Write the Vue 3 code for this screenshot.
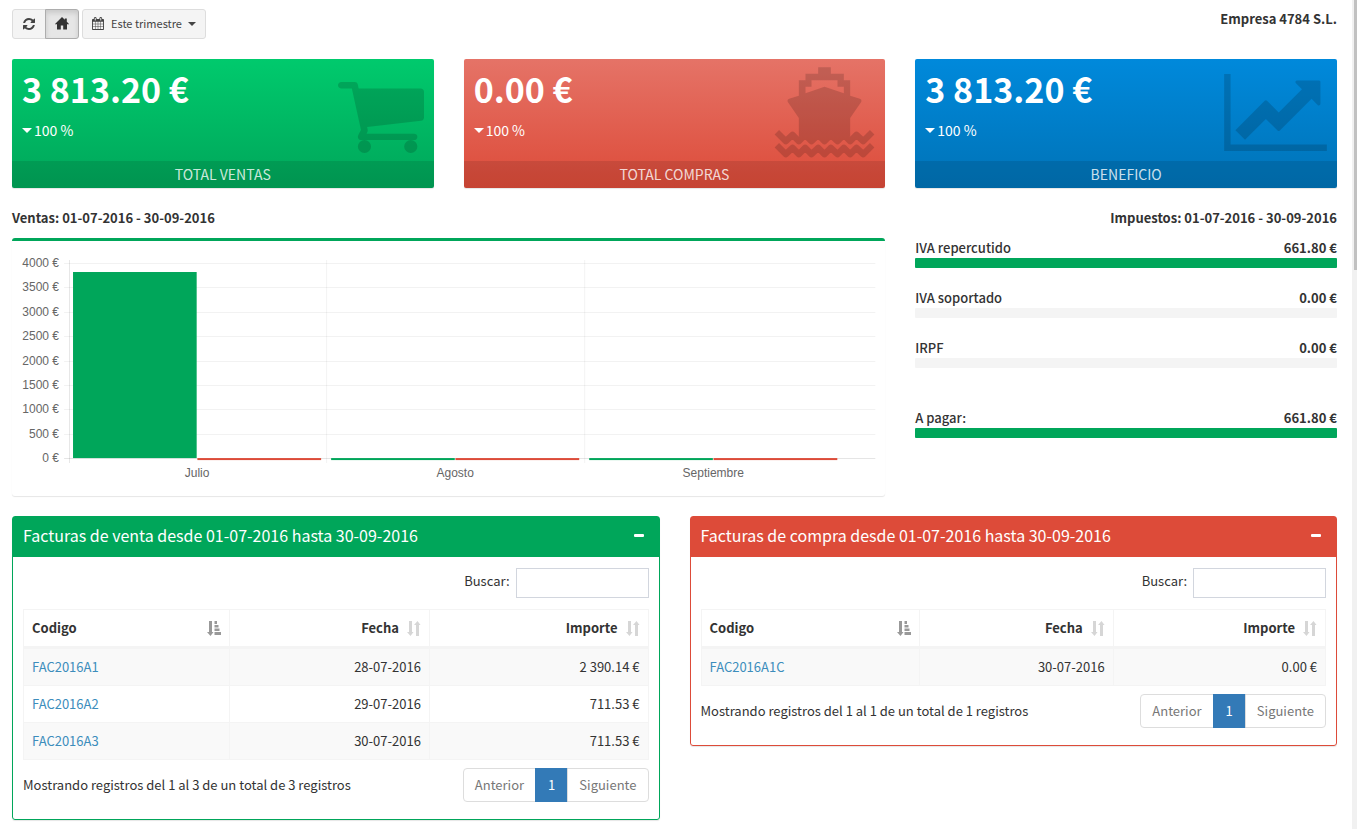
<script setup>
const cards = [
  { tone: 'green', icon: 'cart', value: '3 813.20 €', trend: '100 %', title: 'TOTAL VENTAS' },
  { tone: 'red', icon: 'ship', value: '0.00 €', trend: '100 %', title: 'TOTAL COMPRAS' },
  { tone: 'blue', icon: 'chart', value: '3 813.20 €', trend: '100 %', title: 'BENEFICIO' },
]

const taxes = [
  { id: 'repercutido', label: 'IVA repercutido', value: '661.80 €', percent: 100 },
  { id: 'soportado', label: 'IVA soportado', value: '0.00 €', percent: 0 },
  { id: 'irpf', label: 'IRPF', value: '0.00 €', percent: 0 },
  { id: 'pagar', label: 'A pagar:', value: '661.80 €', percent: 100, total: true },
]

const panels = [
  {
    id: 'ventas',
    tone: 'green',
    title: 'Facturas de venta desde 01-07-2016 hasta 30-09-2016',
    info: 'Mostrando registros del 1 al 3 de un total de 3 registros',
    rows: [
      { code: 'FAC2016A1', date: '28-07-2016', amount: '2 390.14 €' },
      { code: 'FAC2016A2', date: '29-07-2016', amount: '711.53 €' },
      { code: 'FAC2016A3', date: '30-07-2016', amount: '711.53 €' },
    ],
  },
  {
    id: 'compras',
    tone: 'red',
    title: 'Facturas de compra desde 01-07-2016 hasta 30-09-2016',
    info: 'Mostrando registros del 1 al 1 de un total de 1 registros',
    rows: [{ code: 'FAC2016A1C', date: '30-07-2016', amount: '0.00 €' }],
  },
]

// Chart geometry, in viewBox units
const left = 57
const base = 217
const step = 258
const ticks = [4000, 3500, 3000, 2500, 2000, 1500, 1000, 500, 0].map((v) => ({
  label: v + ' €',
  y: Math.round(base - (v * 195) / 4000),
}))
const months = [
  { name: 'Julio', sales: 3813.2 },
  { name: 'Agosto', sales: 0 },
  { name: 'Septiembre', sales: 0 },
].map((m, i) => {
  const height = Math.round((m.sales * 195) / 4000)
  return {
    name: m.name,
    x: left + i * step,
    line: left + i * step - (i ? 0.5 : -0.5),
    top: height ? base - height : base,
    height: height || 2,
  }
})
</script>

<template>
  <div class="page">
    <main class="content">
      <header class="toolbar">
        <div class="tools">
          <div class="group">
            <button type="button" class="btn" aria-label="Recargar">
              <svg width="14" height="14" viewBox="0 0 1792 1792"><path d="M1639 1056q0 5-1 7-64 268-268 434.500t-478 166.500q-146 0-282.500-55t-243.500-157l-129 129q-19 19-45 19t-45-19-19-45v-448q0-26 19-45t45-19h448q26 0 45 19t19 45-19 45l-137 137q71 66 161 102t187 36q134 0 250-65t186-179q11-17 53-117 8-23 30-23h192q13 0 22.500 9.500t9.500 22.500zm25-800v448q0 26-19 45t-45 19h-448q-26 0-45-19t-19-45 19-45l138-138q-148-137-349-137-134 0-250 65t-186 179q-11 17-53 117-8 23-30 23h-199q-13 0-22.500-9.500t-9.500-22.500v-7q65-268 270-434.500t480-166.500q146 0 284 55.500t245 156.500l130-129q19-19 45-19t45 19 19 45z" /></svg>
            </button>
            <button type="button" class="btn active" aria-label="Inicio">
              <svg width="14" height="13" viewBox="0 0 14 13"><path d="M7 0 0 6.900l.9.600L2 7v5.500h3.800V8.600h2.400v3.900H12V7l1.100.5.9-.6-2.200-2.200V1.500H9.800v1.300z" /></svg>
            </button>
          </div>
          <button type="button" class="btn period">
            <svg width="12" height="13" viewBox="0 0 1664 1792"><path d="M128 1664h288v-288H128v288zm352 0h320v-288H480v288zM128 1312h288V992H128v320zm352 0h320V992H480v320zM128 928h288V640H128v288zm736 736h320v-288H864v288zM480 928h320V640H480v288zm768 736h288v-288h-288v288zM864 1312h320V992H864v320zM512 448V160q0-13-9.500-22.500T480 128h-64q-13 0-22.500 9.500T384 160v288q0 13 9.500 22.500T416 480h64q13 0 22.500-9.500T512 448zm736 864h288V992h-288v320zM864 928h320V640H864v288zm384 0h288V640h-288v288zm32-480V160q0-13-9.500-22.500T1248 128h-64q-13 0-22.500 9.500T1152 160v288q0 13 9.500 22.500t22.500 9.500h64q13 0 22.500-9.500t9.500-22.500zm384-64v1280q0 52-38 90t-90 38H128q-52 0-90-38t-38-90V384q0-52 38-90t90-38h128v-96q0-66 47-113T416 0h64q66 0 113 47t47 113v96h384v-96q0-66 47-113t113-47h64q66 0 113 47t47 113v96h128q52 0 90 38t38 90z" /></svg>
            <span>Este trimestre</span>
            <i class="caret"></i>
          </button>
        </div>
        <strong class="company">Empresa 4784 S.L.</strong>
      </header>

      <section class="cards">
        <article v-for="card in cards" :key="card.title" class="card" :class="card.tone">
          <svg v-if="card.icon === 'cart'" class="art cart" width="86" height="71" viewBox="64 256 1664 1408" preserveAspectRatio="none"><path d="M704 1536q0 52-38 90t-90 38-90-38-38-90 38-90 90-38 90 38 38 90zm896 0q0 52-38 90t-90 38-90-38-38-90 38-90 90-38 90 38 38 90zm128-1088v512q0 24-16.500 42.500t-40.500 21.500l-1044 122q13 60 13 70 0 16-24 64h920q26 0 45 19t19 45-19 45-45 19h-1024q-26 0-45-19t-19-45q0-11 8-31.500t16-36 21.500-40 15.500-29.500l-177-823h-204q-26 0-45-19t-19-45 19-45 45-19h256q16 0 28.500 6.500t19.500 15.500 13 24.500 8 26 5.500 29.500 4.500 26h1201q26 0 45 19t19 45z" /></svg>
          <svg v-else-if="card.icon === 'ship'" class="art ship" width="101" height="91" viewBox="26 22 302 273">
            <path d="M158 23h38v19h39v20h19v46l29 9q7 3 4 10l-33 48v54l-19 8H119l-19-8V175L67 127q-3-7 4-10l29-9V62h20V42h38zM138 62v19h-18v20l57-20 58 20V81h-19V62z" />
            <g fill="none" stroke="currentColor" stroke-width="19" stroke-linejoin="round">
              <path d="M34 218 61 244.500 81 225.500 100 244.500 119 225.500 138 244.500 158 225.500 177 244.500 196 225.500 216 244.500 235 225.500 254 244.500 273 225.500 293 244.500 320 218" />
              <path d="M34 257 61 283.500 81 264.500 100 283.500 119 264.500 138 283.500 158 264.500 177 283.500 196 264.500 216 283.500 235 264.500 254 283.500 273 264.500 293 283.500 320 257" />
            </g>
          </svg>
          <svg v-else class="art chart" width="103" height="77" viewBox="0 0 2048 1536"><path d="M2048 1408v128H0V0h128v1408zM1920 160v435q0 21-19.500 29.500T1865 617l-121-121-633 633q-10 10-23 10t-23-10L832 896l-416 416-192-192 585-585q10-10 23-10t23 10l233 233 464-464-121-121q-16-16-7.500-35.500T1453 128h435q14 0 23 9t9 23z" /></svg>
          <div class="card-body">
            <h3>{{ card.value }}</h3>
            <p><i class="caret"></i>{{ card.trend }}</p>
          </div>
          <footer>{{ card.title }}</footer>
        </article>
      </section>

      <section class="middle">
        <div class="sales">
          <h4>Ventas: 01-07-2016 - 30-09-2016</h4>
          <div class="chart-box">
            <svg class="plot" viewBox="0 0 873 255" role="img" aria-label="Ventas y compras por mes">
              <g class="grid">
                <path v-for="t in ticks" :key="t.y" :d="`M52 ${t.y + 0.5}H863`" />
                <path :d="`M52 ${base + 0.5}H863`" />
                <path v-for="m in months" :key="m.name" :d="`M${m.line} 19V222`" />
                <path :d="`M${left + 0.5} 19V222`" />
              </g>
              <template v-for="m in months" :key="m.name">
                <rect class="sale" :x="m.x + 4" :y="m.top" width="123.600" :height="m.height" />
                <rect class="buy" :x="m.x + 128.300" :y="base" width="123.700" height="2" />
                <text :x="m.x + 128" y="236" text-anchor="middle">{{ m.name }}</text>
              </template>
              <text v-for="t in ticks" :key="t.label" x="47" :y="t.y + 4" text-anchor="end">{{ t.label }}</text>
            </svg>
          </div>
        </div>

        <div class="taxes">
          <h4>Impuestos: 01-07-2016 - 30-09-2016</h4>
          <div v-for="tax in taxes" :key="tax.id" class="tax" :class="{ total: tax.total }">
            <div class="tax-head">
              <span :id="'tax-' + tax.id">{{ tax.label }}</span>
              <strong>{{ tax.value }}</strong>
            </div>
            <div class="track" role="progressbar" :aria-labelledby="'tax-' + tax.id" :aria-valuenow="tax.percent">
              <div class="fill" :style="{ width: tax.percent + '%' }"></div>
            </div>
          </div>
        </div>
      </section>

      <section class="panels">
        <article v-for="panel in panels" :key="panel.id" class="panel" :class="[panel.tone, panel.id]">
          <header class="panel-head">
            <h2>{{ panel.title }}</h2>
            <button type="button" class="collapse" aria-label="Contraer"><i></i></button>
          </header>
          <div class="panel-body">
            <div class="search">
              <label :for="'buscar-' + panel.id">Buscar:</label>
              <input :id="'buscar-' + panel.id" type="search" />
            </div>
            <table>
              <thead>
                <tr>
                  <th class="code">
                    <div class="head">
                      <span>Codigo</span>
                      <svg class="sorted" width="14" height="15" viewBox="0 0 14 15"><path d="M2 0h3v11h1.500L3.500 15 0 11h2zM7.500 0H10v3H7.500zM7.500 4h4v2.500h-4zM7.500 7.500h5V10h-5zM7.500 11H14v3H7.500z" /></svg>
                    </div>
                  </th>
                  <th class="date">
                    <div class="head end">
                      <span>Fecha</span>
                      <svg width="14" height="15" viewBox="0 0 14 15"><path d="M2 0h3v11h1.500L3.500 15 0 11h2zM9 15h3V4h1.500L10.500 0 7 4h2z" /></svg>
                    </div>
                  </th>
                  <th class="amount">
                    <div class="head end">
                      <span>Importe</span>
                      <svg width="14" height="15" viewBox="0 0 14 15"><path d="M2 0h3v11h1.500L3.500 15 0 11h2zM9 15h3V4h1.500L10.500 0 7 4h2z" /></svg>
                    </div>
                  </th>
                </tr>
              </thead>
              <tbody>
                <tr v-for="row in panel.rows" :key="row.code">
                  <td><a href="#">{{ row.code }}</a></td>
                  <td class="num">{{ row.date }}</td>
                  <td class="num">{{ row.amount }}</td>
                </tr>
              </tbody>
            </table>
            <div class="table-foot">
              <p>{{ panel.info }}</p>
              <nav class="pages">
                <button type="button">Anterior</button>
                <button type="button" class="current">1</button>
                <button type="button">Siguiente</button>
              </nav>
            </div>
          </div>
        </article>
      </section>
    </main>
    <div class="rail"><div class="thumb"></div></div>
  </div>
</template>

<style>
body {
  margin: 0;
  background: #fff;
}
</style>

<style scoped>
.page {
  display: flex;
  min-height: 100vh;
  color: #333;
  font: 13px/20px "Source Sans Pro", "Noto Sans CJK SC", sans-serif;
}
.page *,
.page *::before {
  box-sizing: border-box;
}
.content {
  flex: 1;
  min-width: 0;
  padding: 9px 15px 9px 12px;
}
.rail {
  width: 5px;
  padding-left: 2px;
  background: #f1f1f1;
}
.thumb {
  height: 270px;
  background: #c1c1c1;
}
h2,
h3,
h4,
p {
  margin: 0;
}
button,
input {
  font: inherit;
}
button {
  cursor: pointer;
}

.toolbar {
  display: flex;
  justify-content: space-between;
}
.tools {
  display: flex;
  gap: 3px;
}
.group {
  display: flex;
}
.btn {
  display: flex;
  align-items: center;
  justify-content: center;
  height: 30px;
  padding: 0 9px 1px;
  border: 1px solid #ddd;
  border-radius: 3px;
  background: #f4f4f4;
  color: #444;
  font-size: 11px;
  line-height: 18px;
}
.btn svg {
  fill: currentColor;
}
.group .btn {
  width: 34px;
  border-radius: 3px 0 0 3px;
}
.group .btn + .btn {
  margin-left: -1px;
  border-radius: 0 3px 3px 0;
}
.btn.active {
  border-color: #adadad;
  background: #e6e6e6;
  color: #333;
  box-shadow: inset 0 3px 5px rgba(0, 0, 0, 0.125);
}
.period span {
  margin: 0 6px 1px 7px;
}
.caret {
  width: 0;
  height: 0;
  border-top: 4px solid;
  border-right: 4px solid transparent;
  border-left: 4px solid transparent;
}
.company {
  font-weight: 700;
}

.cards {
  display: grid;
  grid-template-columns: repeat(3, 1fr);
  gap: 30px;
  margin-top: 20px;
}
.card {
  position: relative;
  border-radius: 2px;
  color: #fff;
  box-shadow: 0 1px 1px rgba(0, 0, 0, 0.1);
}
.card.green {
  background: linear-gradient(#00ca6d, #00a65a);
}
.card.red {
  background: linear-gradient(#e57367, #dd4b39);
}
.card.blue {
  background: linear-gradient(#0089db, #0073b7);
}
.card-body {
  padding: 10px;
}
.card h3 {
  font-size: 34px;
  font-weight: 700;
  line-height: 40px;
}
.card p {
  display: flex;
  align-items: center;
  gap: 2px;
  margin-top: 11px;
  padding-bottom: 11px;
  font-size: 14px;
  line-height: 20px;
}
.card .caret {
  border-width: 5px 5px 0;
}
.card footer {
  padding: 3px 0;
  border-radius: 0 0 2px 2px;
  background: rgba(0, 0, 0, 0.1);
  color: rgba(255, 255, 255, 0.8);
  font-size: 14px;
  line-height: 21px;
  text-align: center;
}
.art {
  position: absolute;
  right: 10px;
  fill: currentColor;
  color: #000;
  opacity: 0.15;
}
.cart {
  top: 23px;
}
.ship {
  top: 8px;
}
.chart {
  top: 15px;
}

.middle {
  display: grid;
  grid-template-columns: repeat(3, 1fr);
  gap: 30px;
  margin-top: 20px;
}
.sales {
  grid-column: span 2;
}
h4 {
  font-size: 13px;
  font-weight: 700;
  line-height: 20px;
}
.chart-box {
  margin-top: 10px;
  border-top: 3px solid #00a65a;
  border-radius: 3px;
  box-shadow: 0 1px 1px rgba(0, 0, 0, 0.1);
}
.plot {
  display: block;
  width: 100%;
}
.plot text {
  fill: #666;
  font: 12px "Liberation Sans", sans-serif;
}
.grid path {
  stroke: rgba(0, 0, 0, 0.05);
}
.sale {
  fill: #00a65a;
}
.buy {
  fill: #dd4b39;
}
.taxes h4 {
  margin-bottom: 10px;
  text-align: right;
}
.tax {
  margin-bottom: 20px;
}
.tax.total {
  margin-top: 40px;
}
.tax-head {
  display: flex;
  justify-content: space-between;
  font-weight: 500;
}
.track {
  height: 10px;
  border-radius: 1px;
  background: #f4f4f4;
}
.fill {
  height: 10px;
  border-radius: 1px;
  background: #00a65a;
}

.panels {
  display: grid;
  grid-template-columns: repeat(2, 1fr);
  align-items: start;
  gap: 30px;
  margin-top: 20px;
}
.panel {
  border: 1px solid var(--tone);
  border-radius: 3px;
  box-shadow: 0 1px 1px rgba(0, 0, 0, 0.1);
}
.panel.green {
  --tone: #00a65a;
}
.panel.red {
  --tone: #dd4b39;
}
.panel-head {
  display: flex;
  align-items: center;
  justify-content: space-between;
  height: 40px;
  padding: 0 10px 4px;
  background: var(--tone);
  color: #fff;
}
.panel-head h2 {
  font-size: 16px;
  font-weight: 400;
}
.collapse {
  padding: 8px 5px;
  border: 0;
  background: none;
}
.collapse i {
  display: block;
  width: 10px;
  height: 3px;
  border-radius: 1px;
  background: #fff;
}
.panel-body {
  padding: 11px 10px 17px;
}
.search {
  display: flex;
  justify-content: flex-end;
  gap: 6px;
  line-height: 26px;
}
.search input {
  width: 133px;
  height: 30px;
  padding: 5px 10px;
  border: 1px solid #d2d6de;
  background: #fff;
}
table {
  width: 100%;
  margin: 11px 0 8px;
  border: 1px solid #f4f4f4;
  border-width: 1px 0 0 1px;
  border-collapse: separate;
  border-spacing: 0;
  table-layout: fixed;
}
th,
td {
  padding: 8px;
  border: 1px solid #f4f4f4;
  border-width: 0 1px 1px 0;
  text-align: left;
}
th {
  border-bottom-width: 3px;
  font-weight: 700;
}
th.code {
  width: 33%;
}
th.date {
  width: 32%;
}
.compras th.code {
  width: 35%;
}
.compras th.date {
  width: 31%;
}
.head {
  display: flex;
  align-items: center;
  justify-content: space-between;
}
.head.end {
  justify-content: flex-end;
  gap: 8px;
}
.head svg {
  overflow: visible;
  fill: #d6d6d6;
}
.head .sorted {
  fill: #999;
}
tbody tr:nth-child(odd) {
  background: #f9f9f9;
}
.num {
  text-align: right;
}
a {
  color: #3c8dbc;
  text-decoration: none;
}
.table-foot {
  display: flex;
  align-items: center;
  justify-content: space-between;
}
.pages {
  display: flex;
}
.pages button {
  height: 34px;
  padding: 0 11px;
  border: 1px solid #ddd;
  border-radius: 4px 0 0 4px;
  background: #fff;
  color: #777;
}
.pages .current {
  margin: 0 -1px;
  padding: 0 12px;
  border-color: #337ab7;
  border-radius: 0;
  background: #337ab7;
  color: #fff;
}
.pages .current + button {
  border-radius: 0 4px 4px 0;
}
</style>
